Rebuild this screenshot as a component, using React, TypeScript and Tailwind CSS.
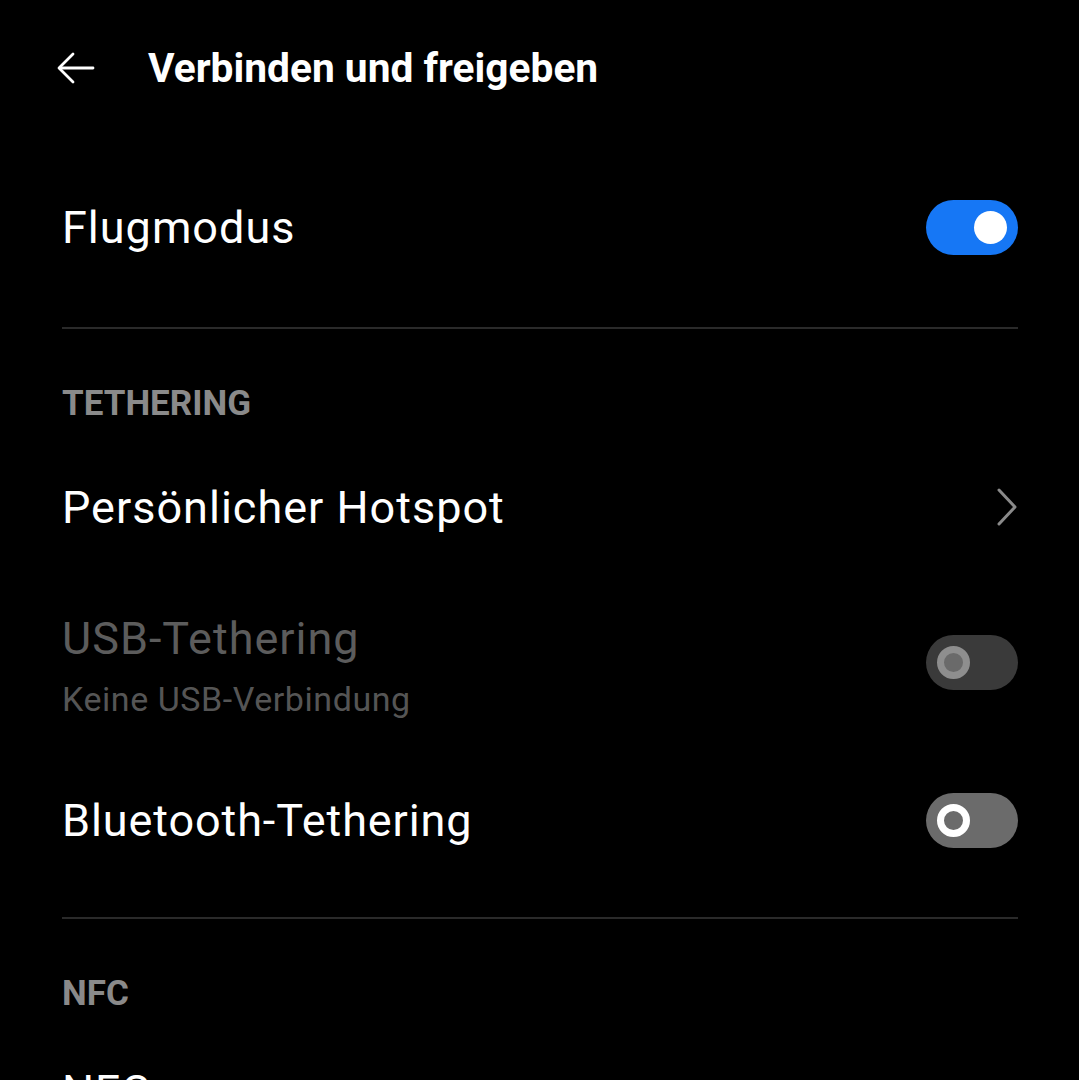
import React from "react";

function Toggle({ state }: { state: "on" | "off" | "disabled" }) {
  if (state === "on") {
    return (
      <div className="flex h-[55px] w-[92px] items-center justify-end rounded-full bg-[#1677f5] px-[11px]">
        <div className="h-[33px] w-[33px] rounded-full bg-white" />
      </div>
    );
  }
  if (state === "disabled") {
    return (
      <div className="flex h-[55px] w-[92px] items-center rounded-full bg-[#3a3a3a] px-[11px]">
        <div className="h-[33px] w-[33px] rounded-full border-[7px] border-[#8e8e8e] bg-[#6a6a6a]" />
      </div>
    );
  }
  return (
    <div className="flex h-[55px] w-[92px] items-center rounded-full bg-[#6b6b6b] px-[11px]">
      <div className="h-[33px] w-[33px] rounded-full border-[7px] border-white bg-[#6b6b6b]" />
    </div>
  );
}

export default function App() {
  return (
    <div
      className="h-[1080px] w-[1079px] overflow-hidden bg-black text-white"
      style={{ fontFamily: "Roboto, 'Noto Sans', sans-serif" }}
    >
      {/* Header */}
      <div className="flex h-[136px] items-center pl-[57px]">
        <svg width="38" height="32" viewBox="0 0 38 32" fill="none" stroke="white" strokeWidth="2.8" strokeLinecap="round" strokeLinejoin="round">
          <path d="M36 16H3" />
          <path d="M16 2L2 16l14 14" />
        </svg>
        <div className="ml-[53px] text-[40.7px] font-bold leading-none">Verbinden und freigeben</div>
      </div>

      <div className="pl-[62px] pr-[61px]">
        {/* Flugmodus */}
        <div className="flex h-[182px] items-center justify-between">
          <div className="text-[45px] leading-none tracking-[1px]">Flugmodus</div>
          <Toggle state="on" />
        </div>
        <div className="mt-[9px] h-[2px] bg-[#2a2a2a]" />

        {/* Tethering header */}
        <div className="flex h-[148px] items-center">
          <div className="text-[35px] font-bold leading-none text-[#8a8a8a]">TETHERING</div>
        </div>

        {/* Persönlicher Hotspot */}
        <div className="flex h-[60px] items-center justify-between">
          <div className="text-[45px] leading-none tracking-[1px]">Persönlicher Hotspot</div>
          <svg width="22" height="38" viewBox="0 0 22 38" fill="none" stroke="#8a8a8a" strokeWidth="3" strokeLinecap="round" strokeLinejoin="round">
            <path d="M3 2l16 17L3 36" />
          </svg>
        </div>

        {/* USB-Tethering */}
        <div className="flex h-[250px] items-center justify-between">
          <div className="flex flex-col pt-[8px]">
            <div className="text-[45px] leading-none tracking-[1px] text-[#5c5c5c]">USB-Tethering</div>
            <div className="mt-[21px] text-[34px] leading-none tracking-[0.55px] text-[#555555]">Keine USB-Verbindung</div>
          </div>
          <Toggle state="disabled" />
        </div>

        {/* Bluetooth-Tethering */}
        <div className="flex h-[66px] items-center justify-between">
          <div className="text-[45px] leading-none tracking-[0.9px]">Bluetooth-Tethering</div>
          <Toggle state="off" />
        </div>
        <div className="mt-[64px] h-[2px] bg-[#2a2a2a]" />

        {/* NFC header */}
        <div className="flex h-[148px] items-center">
          <div className="text-[35px] font-bold leading-none text-[#8a8a8a]">NFC</div>
        </div>

        {/* NFC item */}
        <div className="flex h-[48px] items-center justify-between">
          <div className="text-[45px] leading-none tracking-[1px]">NFC</div>
        </div>
      </div>
    </div>
  );
}
